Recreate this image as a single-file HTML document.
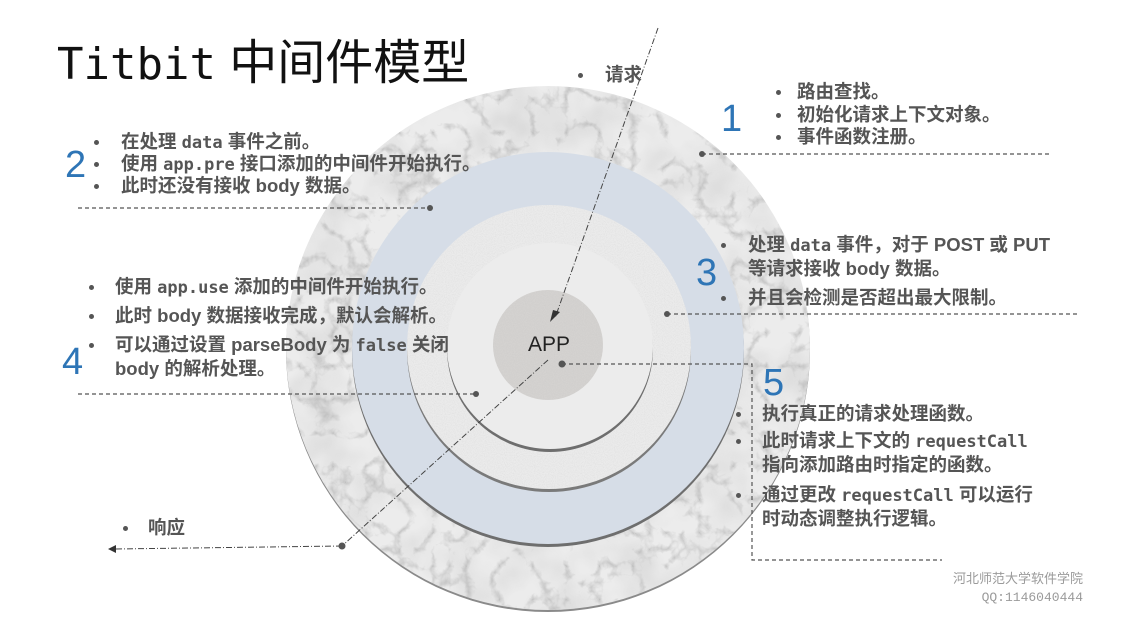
<!DOCTYPE html>
<html><head><meta charset="utf-8">
<style>
html,body{margin:0;padding:0;background:#fff;}
body{width:1131px;height:636px;position:relative;overflow:hidden;font-family:"Liberation Sans","Noto Sans CJK SC",sans-serif;color:#4a4a4a;}
.t{position:absolute;font-size:18.5px;line-height:20px;white-space:nowrap;font-weight:bold;color:#555;}
.t span.c{font-family:"DejaVu Sans Mono","Liberation Mono",monospace;font-weight:bold;font-size:17px;}
.n{position:absolute;font-size:38px;line-height:38px;color:#2e75b6;font-family:"Liberation Sans",sans-serif;}
.b{position:absolute;width:5px;height:5px;border-radius:50%;background:#555;}
</style></head><body>
<svg width="1131" height="636" style="position:absolute;left:0;top:0">
<defs>
<filter id="marble" x="0" y="0" width="100%" height="100%">
<feTurbulence type="turbulence" baseFrequency="0.03" numOctaves="4" seed="3"/>
<feColorMatrix type="matrix" values="0 0 0 0 0.42  0 0 0 0 0.42  0 0 0 0 0.42  -3 0 0 0 0.8"/>
<feComposite in2="SourceGraphic" operator="in"/>
</filter>
<filter id="mottle" x="0" y="0" width="100%" height="100%">
<feTurbulence type="fractalNoise" baseFrequency="0.02" numOctaves="3" seed="8"/>
<feColorMatrix type="matrix" values="0 0 0 0 0.5  0 0 0 0 0.5  0 0 0 0 0.5  -1.2 0 0 0 0.75"/>
<feComposite in2="SourceGraphic" operator="in"/>
</filter>
<filter id="grain" x="0" y="0" width="100%" height="100%">
<feTurbulence type="fractalNoise" baseFrequency="0.9" numOctaves="2" seed="5"/>
<feColorMatrix type="matrix" values="0 0 0 0 0.5  0 0 0 0 0.5  0 0 0 0 0.5  0 0 0 -0.9 0.55"/>
<feComposite in2="SourceGraphic" operator="in"/>
</filter>
</defs>
<circle cx="548" cy="350" r="262" fill="#8a8a8a"/>
<circle cx="548" cy="348" r="262" fill="#ececec"/>
<circle cx="548" cy="348" r="262" fill="#fff" filter="url(#mottle)" opacity="0.6"/>
<circle cx="548" cy="348" r="262" fill="#fff" filter="url(#marble)" opacity="0.8"/>
<circle cx="548" cy="351" r="196" fill="#6e6e6e"/>
<circle cx="548" cy="348" r="196" fill="#d6dde7"/>
<circle cx="549" cy="350" r="142" fill="#7a7a7a"/>
<circle cx="549" cy="347" r="142" fill="#ebebeb"/>
<circle cx="549" cy="347" r="142" fill="#fff" filter="url(#grain)" opacity="0.5"/>
<circle cx="550" cy="349" r="103" fill="#6e6e6e"/>
<circle cx="550" cy="346" r="103" fill="#ececec"/>
<circle cx="548" cy="345" r="55" fill="#d4d2d0"/>
<circle cx="548" cy="345" r="55" fill="#fff" filter="url(#grain)" opacity="0.5"/>
<g stroke="#555" stroke-width="1.2" fill="none" stroke-dasharray="4,3">
<line x1="702" y1="154" x2="1052" y2="154"/>
<line x1="78" y1="208" x2="430" y2="208"/>
<line x1="667" y1="314" x2="1077" y2="314"/>
<line x1="78" y1="394" x2="476" y2="394"/>
<polyline points="562,364 752,364 752,560 942,560"/>
</g>
<g stroke="#444" stroke-width="1" fill="none" stroke-dasharray="6,2,1,2">
<line x1="658" y1="28" x2="555" y2="318"/>
<line x1="548" y1="360" x2="342" y2="546"/>
<line x1="342" y1="546" x2="114" y2="549"/>
</g>
<polygon points="550,322 560,312 553,310" fill="#333"/>
<polygon points="108,549 116,545 116,553" fill="#333"/>
<g fill="#555">
<circle cx="702" cy="154" r="3"/><circle cx="430" cy="208" r="3"/>
<circle cx="667" cy="314" r="3"/><circle cx="476" cy="394" r="3"/>
<circle cx="562" cy="364" r="3.5"/><circle cx="342" cy="546" r="3.5"/>
</g>
</svg>

<div style="position:absolute;left:57px;top:30px;font-size:48px;line-height:56px;color:#111;white-space:nowrap"><span style="font-family:'DejaVu Sans Mono','Liberation Mono',monospace;font-size:44px">Titbit</span> <span style="font-family:'Noto Sans CJK SC',sans-serif">中间件模型</span></div>

<div class="b" style="left:578px;top:73px"></div><div class="t" style="left:605px;top:65px">请求</div>

<div class="n" style="left:721px;top:100px">1</div>
<div class="b" style="left:776px;top:90px"></div><div class="t" style="left:797px;top:82px">路由查找。</div>
<div class="b" style="left:776px;top:113px"></div><div class="t" style="left:797px;top:105px">初始化请求上下文对象。</div>
<div class="b" style="left:776px;top:135px"></div><div class="t" style="left:797px;top:127px">事件函数注册。</div>

<div class="n" style="left:65px;top:146px">2</div>
<div class="b" style="left:94px;top:140px"></div><div class="t" style="left:121px;top:132px">在处理 <span class="c">data</span> 事件之前。</div>
<div class="b" style="left:94px;top:162px"></div><div class="t" style="left:121px;top:154px">使用 <span class="c">app.pre</span> 接口添加的中间件开始执行。</div>
<div class="b" style="left:94px;top:184px"></div><div class="t" style="left:121px;top:176px">此时还没有接收 body 数据。</div>

<div class="n" style="left:696px;top:254px">3</div>
<div class="b" style="left:721px;top:243px"></div><div class="t" style="left:748px;top:235px">处理 <span class="c">data</span> 事件，对于 POST 或 PUT</div>
<div class="t" style="left:748px;top:259px">等请求接收 body 数据。</div>
<div class="b" style="left:721px;top:296px"></div><div class="t" style="left:748px;top:288px">并且会检测是否超出最大限制。</div>

<div class="n" style="left:62px;top:343px">4</div>
<div class="b" style="left:89px;top:285px"></div><div class="t" style="left:115px;top:277px">使用 <span class="c">app.use</span> 添加的中间件开始执行。</div>
<div class="b" style="left:89px;top:314px"></div><div class="t" style="left:115px;top:306px">此时 body 数据接收完成，默认会解析。</div>
<div class="b" style="left:89px;top:343px"></div><div class="t" style="left:115px;top:335px">可以通过设置 parseBody 为 <span class="c">false</span> 关闭</div>
<div class="t" style="left:115px;top:359px">body 的解析处理。</div>

<div style="position:absolute;left:528px;top:333px;font-size:21px;line-height:24px;color:#222">APP</div>

<div class="n" style="left:763px;top:364px">5</div>
<div class="b" style="left:736px;top:412px"></div><div class="t" style="left:762px;top:404px">执行真正的请求处理函数。</div>
<div class="b" style="left:736px;top:439px"></div><div class="t" style="left:762px;top:431px">此时请求上下文的 <span class="c">requestCall</span></div>
<div class="t" style="left:762px;top:455px">指向添加路由时指定的函数。</div>
<div class="b" style="left:736px;top:493px"></div><div class="t" style="left:762px;top:485px">通过更改 <span class="c">requestCall</span> 可以运行</div>
<div class="t" style="left:762px;top:509px">时动态调整执行逻辑。</div>

<div class="b" style="left:123px;top:526px"></div><div class="t" style="left:148px;top:518px">响应</div>

<div style="position:absolute;right:48px;top:570px;font-size:13px;line-height:18px;color:#9a9a9a;text-align:right;white-space:nowrap">河北师范大学软件学院<br><span style="font-family:'Liberation Mono',monospace">QQ:1146040444</span></div>
</body></html>
